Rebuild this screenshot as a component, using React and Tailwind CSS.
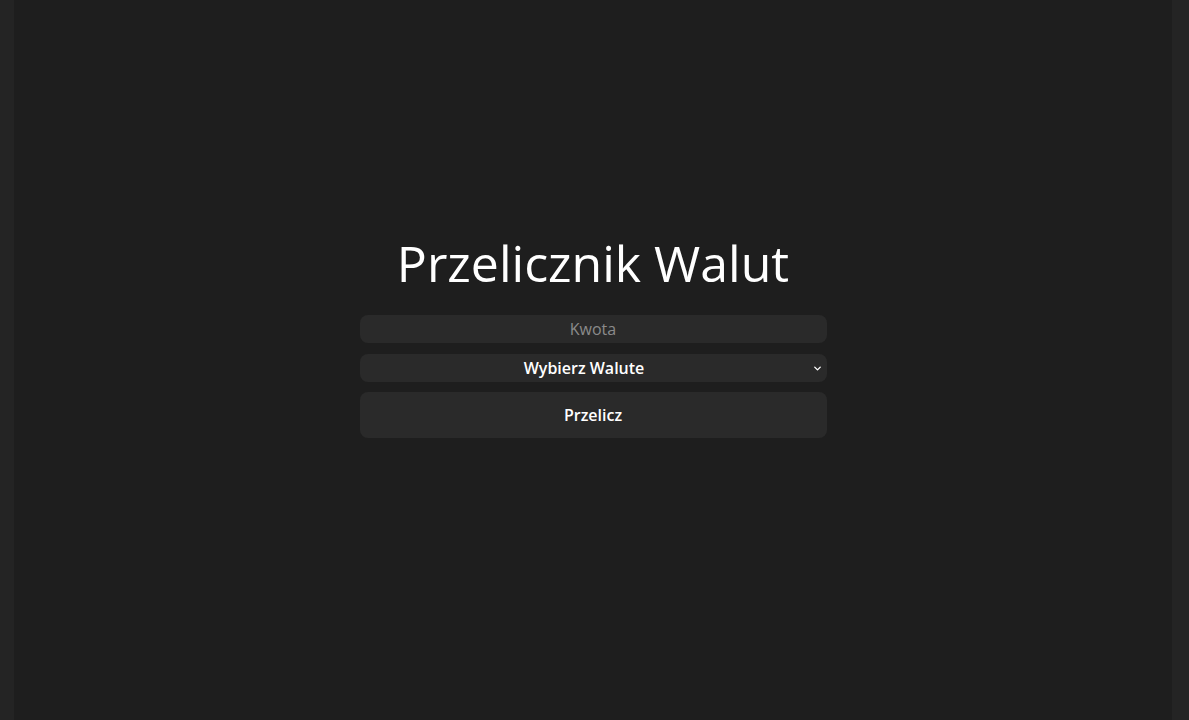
import { ChevronDown } from "lucide-react";

const App = () => {
  return (
    <div
      className="flex min-h-screen bg-[#242424] pl-[14px] pr-[17px] text-white"
      style={{ fontFamily: "'Open Sans', sans-serif" }}
    >
      <main className="flex-1 h-[720px] bg-[#1e1e1e] flex flex-col items-center pt-[229px]">
        <h1 className="text-[50px] leading-[68px] font-normal">
          Przelicznik Walut
        </h1>

        <div className="mt-[18px] w-[467px] flex flex-col gap-[11px]">
          <input
            type="text"
            placeholder="Kwota"
            className="h-[28px] w-full rounded-lg bg-[#2a2a2a] text-center text-base text-white placeholder:text-[#8a8a8a] outline-none"
          />

          <div className="relative">
            <select
              defaultValue=""
              className="h-[28px] w-full appearance-none rounded-lg bg-[#2a2a2a] pr-[18px] text-center text-base font-semibold text-white outline-none"
            >
              <option value="" disabled>
                Wybierz Walute
              </option>
              <option value="EUR">EUR</option>
              <option value="USD">USD</option>
              <option value="CHF">CHF</option>
            </select>
            <ChevronDown
              className="pointer-events-none absolute right-[4px] top-[9px] w-[11px] h-[11px] text-white"
              strokeWidth={3}
            />
          </div>

          <button
            type="button"
            className="-mt-[1px] h-[46px] w-full rounded-lg bg-[#2a2a2a] text-base font-semibold text-white"
          >
            Przelicz
          </button>
        </div>
      </main>
    </div>
  );
};

export default App;
